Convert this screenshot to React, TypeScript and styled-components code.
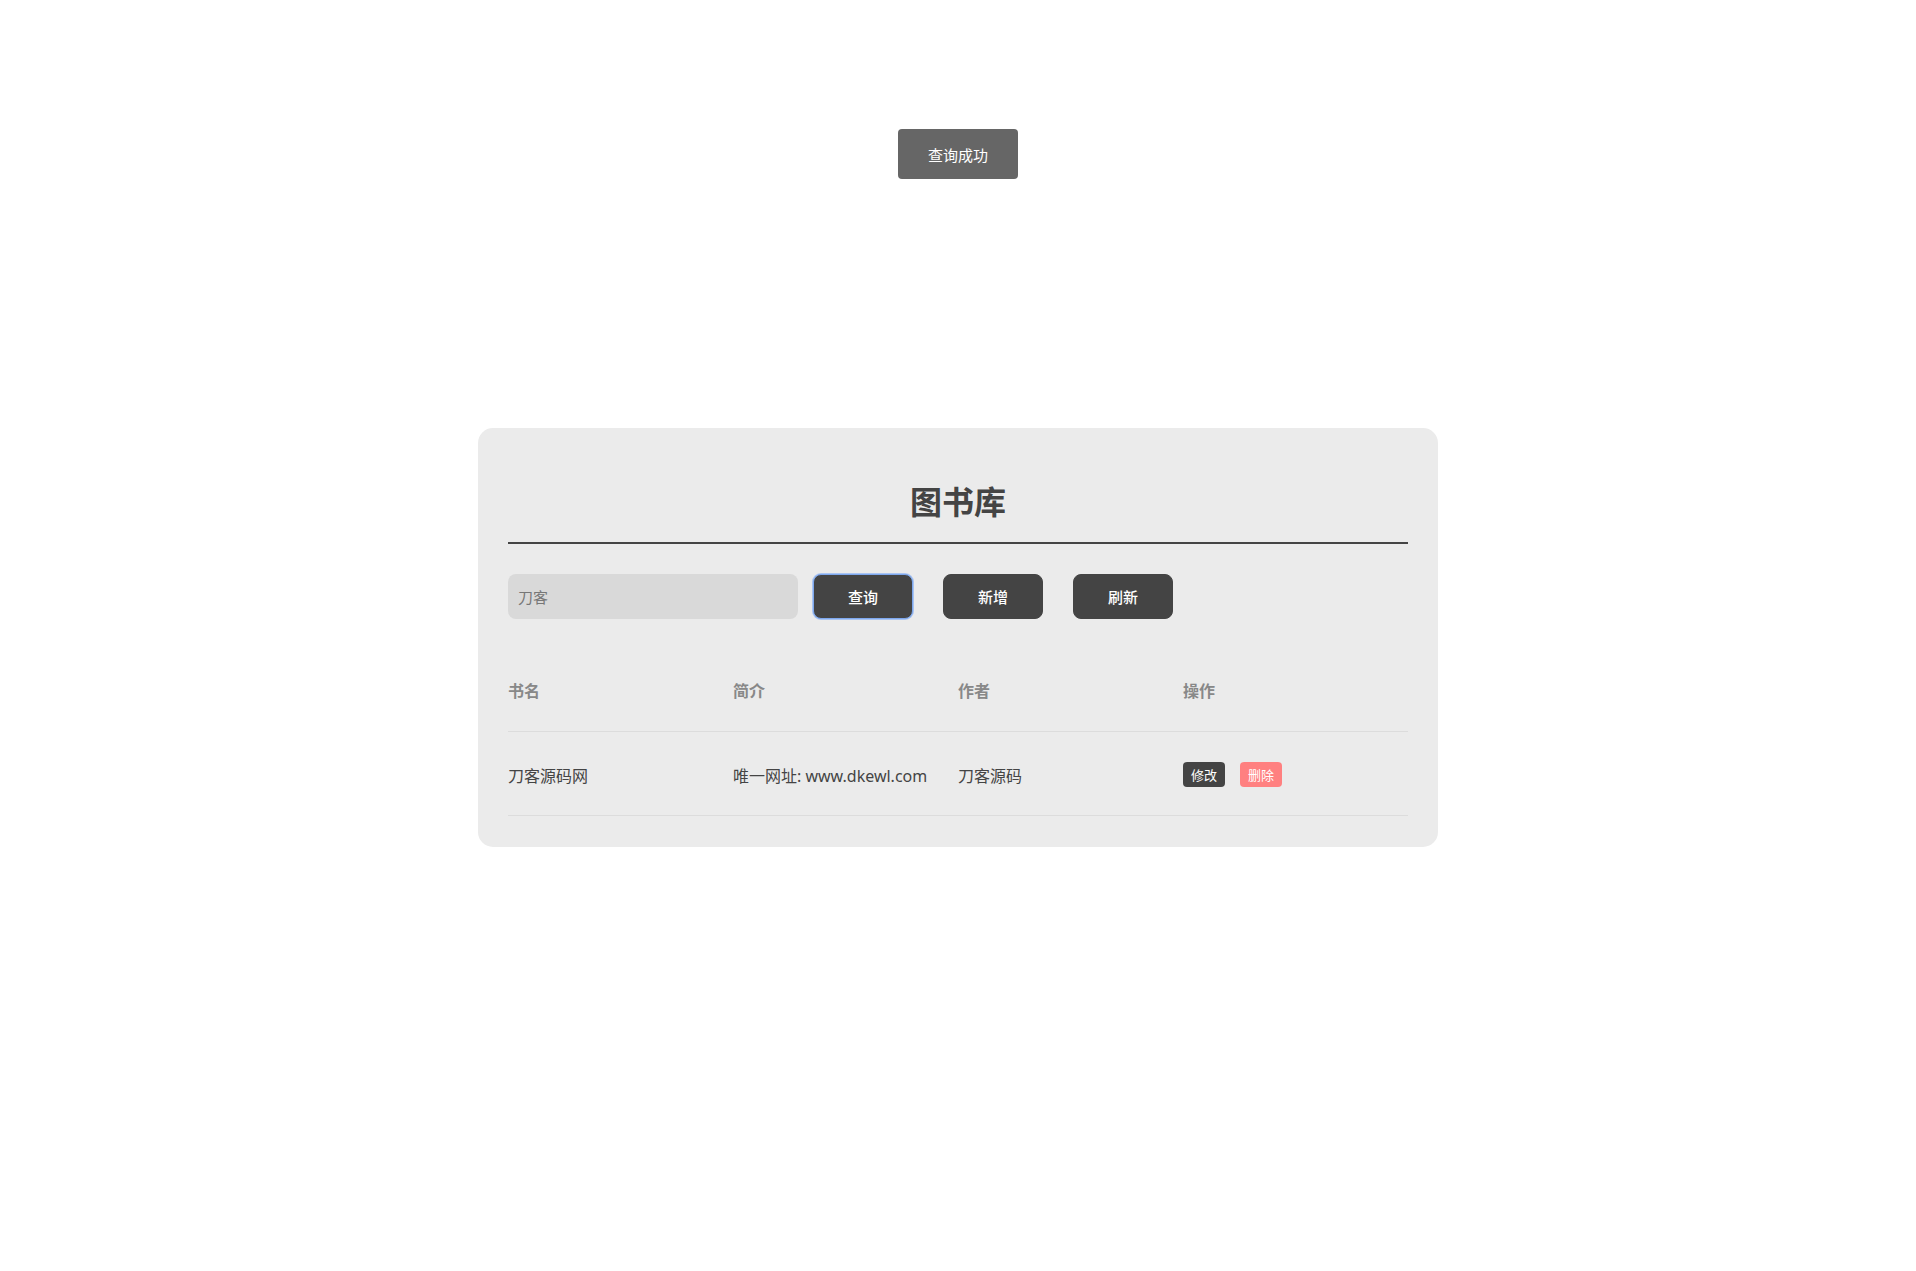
import React, { useState } from 'react';
import styled, { createGlobalStyle } from 'styled-components';

const GlobalStyle = createGlobalStyle`
	html, body {
		margin: 0;
		padding: 0;
		background: #fff;
	}
	body {
		font-family: "Noto Sans", "Noto Sans CJK SC", sans-serif;
	}
	* {
		box-sizing: border-box;
	}
`;

const Page = styled.div`
	min-height: 100vh;
	padding-top: 4px;
	display: flex;
	align-items: center;
	justify-content: center;
`;

const Toast = styled.div`
	position: fixed;
	top: 129px;
	left: 50%;
	transform: translateX(-50%);
	width: 120px;
	height: 50px;
	display: flex;
	align-items: center;
	justify-content: center;
	background: #666;
	color: #fff;
	font-size: 15px;
	border-radius: 4px;
`;

const Card = styled.div`
	width: 960px;
	padding: 30px 30px 31px;
	background: #ebebeb;
	border-radius: 15px;
`;

const Title = styled.h1`
	margin: 0;
	padding: 23px 0 20px;
	font-size: 32px;
	line-height: 41px;
	font-weight: 700;
	color: #444;
	text-align: center;
	border-bottom: 2px solid #444;
`;

const Toolbar = styled.div`
	margin-top: 30px;
	display: flex;
	align-items: center;
`;

const SearchInput = styled.input`
	width: 290px;
	height: 45px;
	padding: 0 10px;
	border: none;
	outline: none;
	border-radius: 8px;
	background: #d9d9d9;
	font-family: inherit;
	font-size: 15px;
	color: #444;
	&::placeholder {
		color: #777;
	}
`;

const ActionButton = styled.button<{ $focused?: boolean }>`
	width: 100px;
	height: 45px;
	margin: 0 15px;
	border: 1px solid ${(p) => (p.$focused ? '#7ea8ee' : '#444')};
	box-shadow: ${(p) => (p.$focused ? '0 0 0 1px #a9c4f2' : 'none')};
	border-radius: 8px;
	background: #444;
	color: #fff;
	font-family: inherit;
	font-size: 15px;
	font-weight: 500;
	cursor: pointer;
`;

const Table = styled.div`
	margin-top: 29px;
`;

const Row = styled.div<{ $head?: boolean }>`
	display: grid;
	grid-template-columns: repeat(4, 225px);
	align-items: center;
	height: 84px;
	border-bottom: 1px solid #dcdcdc;
	font-size: 16px;
	font-weight: ${(p) => (p.$head ? 700 : 400)};
	color: ${(p) => (p.$head ? '#888' : '#444')};
	padding-top: ${(p) => (p.$head ? 0 : 2)}px;
`;

const Ops = styled.div`
	display: flex;
	gap: 15px;
`;

const Tag = styled.button<{ $danger?: boolean }>`
	height: 25px;
	padding: 0 8px;
	border: none;
	border-radius: 4px;
	background: ${(p) => (p.$danger ? '#ff8080' : '#444')};
	color: #fff;
	font-family: inherit;
	font-size: 13px;
	cursor: pointer;
`;

const books = [{ name: '刀客源码网', intro: '唯一网址: www.dkewl.com', author: '刀客源码' }];

export default function App() {
	const [keyword, setKeyword] = useState('');
	return (
		<>
			<GlobalStyle />
			<Toast>查询成功</Toast>
			<Page>
				<Card>
					<Title>图书库</Title>
					<Toolbar>
						<SearchInput
							placeholder="刀客"
							value={keyword}
							onChange={(e) => setKeyword(e.target.value)}
						/>
						<ActionButton $focused>查询</ActionButton>
						<ActionButton>新增</ActionButton>
						<ActionButton>刷新</ActionButton>
					</Toolbar>
					<Table>
						<Row $head>
							<div>书名</div>
							<div>简介</div>
							<div>作者</div>
							<div>操作</div>
						</Row>
						{books.map((b) => (
							<Row key={b.name}>
								<div>{b.name}</div>
								<div>{b.intro}</div>
								<div>{b.author}</div>
								<Ops>
									<Tag>修改</Tag>
									<Tag $danger>删除</Tag>
								</Ops>
							</Row>
						))}
					</Table>
				</Card>
			</Page>
		</>
	);
}
